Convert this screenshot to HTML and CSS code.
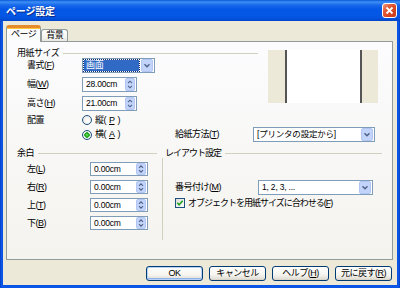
FILE: index.html
```html
<!DOCTYPE html>
<html lang="ja">
<head>
<meta charset="utf-8">
<title>ページ設定</title>
<link rel="stylesheet" href="styles.css">
</head>
<body>
<div class="win">
  <div class="titlebar">
    <span class="title">ページ設定</span>
    <span class="close"><svg width="13" height="13" viewBox="0 0 13 13"><path d="M3.5 3.5l6 6M9.5 3.5l-6 6" stroke="#fff" stroke-width="1.8" fill="none"/></svg></span>
  </div>
  <div class="client">
    <div class="tabs">
      <div class="tab active">ページ</div>
      <div class="tab">背景</div>
    </div>
    <div class="panel">
      <div class="top">
        <div class="paper">
          <div class="ghead"><span>用紙サイズ</span></div>
          <div class="frow">
            <span class="lbl">書式(<u>F</u>)</span>
            <div class="field combo w73"><span class="val hl">画面</span><svg class="ddb" width="12" height="13" viewBox="0 0 12 13"><rect x=".5" y=".5" width="11" height="12" rx="1.5" fill="#C3D4FB" stroke="#B2C5F3"/><path d="M3.5 5.2l2.5 2.5 2.5-2.5" stroke="#4D6185" stroke-width="1.4" fill="none"/></svg></div>
          </div>
          <div class="frow">
            <span class="lbl">幅(<u>W</u>)</span>
            <div class="field w55"><span class="val">28.00cm</span><svg class="sb" width="10" height="13" viewBox="0 0 10 13"><rect x=".5" y=".5" width="9" height="12" rx="1.5" fill="#C3D4FB" stroke="#B2C5F3"/><path d="M3 5.2l2-2 2 2M3 7.8l2 2 2-2" stroke="#4D6185" stroke-width="1.1" fill="none"/></svg></div>
          </div>
          <div class="frow">
            <span class="lbl">高さ(<u>H</u>)</span>
            <div class="field w55"><span class="val">21.00cm</span><svg class="sb" width="10" height="13" viewBox="0 0 10 13"><rect x=".5" y=".5" width="9" height="12" rx="1.5" fill="#C3D4FB" stroke="#B2C5F3"/><path d="M3 5.2l2-2 2 2M3 7.8l2 2 2-2" stroke="#4D6185" stroke-width="1.1" fill="none"/></svg></div>
          </div>
        </div>
        <div class="preview"><div class="page"></div></div>
      </div>
      <div class="rrow first">
        <span class="lbl">配置</span>
        <span class="opt"><span class="radio"></span>縦(<u>P</u>)</span>
      </div>
      <div class="rrow">
        <span class="lbl"></span>
        <span class="opt"><span class="radio on"></span>横(<u>A</u>)</span>
        <span class="lbl2">給紙方法(<u>T</u>)</span>
        <div class="field combo w122"><span class="val">[プリンタの設定から]</span><svg class="ddb" width="12" height="13" viewBox="0 0 12 13"><rect x=".5" y=".5" width="11" height="12" rx="1.5" fill="#C3D4FB" stroke="#B2C5F3"/><path d="M3.5 5.2l2.5 2.5 2.5-2.5" stroke="#4D6185" stroke-width="1.4" fill="none"/></svg></div>
      </div>
      <div class="bottom">
        <div class="margins">
          <div class="ghead"><span>余白</span></div>
          <div class="mrow"><span class="mlbl">左(<u>L</u>)</span><div class="field small w58"><span class="val">0.00cm</span><svg class="sb" width="10" height="12" viewBox="0 0 10 12"><rect x=".5" y=".5" width="9" height="11" rx="1.5" fill="#C3D4FB" stroke="#B2C5F3"/><path d="M3 4.8l2-2 2 2M3 7.2l2 2 2-2" stroke="#4D6185" stroke-width="1.1" fill="none"/></svg></div></div>
          <div class="mrow"><span class="mlbl">右(<u>R</u>)</span><div class="field small w58"><span class="val">0.00cm</span><svg class="sb" width="10" height="12" viewBox="0 0 10 12"><rect x=".5" y=".5" width="9" height="11" rx="1.5" fill="#C3D4FB" stroke="#B2C5F3"/><path d="M3 4.8l2-2 2 2M3 7.2l2 2 2-2" stroke="#4D6185" stroke-width="1.1" fill="none"/></svg></div></div>
          <div class="mrow"><span class="mlbl">上(<u>T</u>)</span><div class="field small w58"><span class="val">0.00cm</span><svg class="sb" width="10" height="12" viewBox="0 0 10 12"><rect x=".5" y=".5" width="9" height="11" rx="1.5" fill="#C3D4FB" stroke="#B2C5F3"/><path d="M3 4.8l2-2 2 2M3 7.2l2 2 2-2" stroke="#4D6185" stroke-width="1.1" fill="none"/></svg></div></div>
          <div class="mrow"><span class="mlbl">下(<u>B</u>)</span><div class="field small w58"><span class="val">0.00cm</span><svg class="sb" width="10" height="12" viewBox="0 0 10 12"><rect x=".5" y=".5" width="9" height="11" rx="1.5" fill="#C3D4FB" stroke="#B2C5F3"/><path d="M3 4.8l2-2 2 2M3 7.2l2 2 2-2" stroke="#4D6185" stroke-width="1.1" fill="none"/></svg></div></div>
        </div>
        <div class="layout">
          <div class="ghead lh"><span class="tight">レイアウト設定</span></div>
          <div class="lbody">
            <div class="nrow">
              <span class="nlbl">番号付け(<u>M</u>)</span>
              <div class="field combo w115"><span class="val">1, 2, 3, ...</span><svg class="ddb" width="12" height="13" viewBox="0 0 12 13"><rect x=".5" y=".5" width="11" height="12" rx="1.5" fill="#C3D4FB" stroke="#B2C5F3"/><path d="M3.5 5.2l2.5 2.5 2.5-2.5" stroke="#4D6185" stroke-width="1.4" fill="none"/></svg></div>
            </div>
            <div class="crow">
              <span class="check"><svg width="8" height="8" viewBox="0 0 8 8"><path d="M1.3 3.8l1.8 1.9 3.6-4" stroke="#21A121" stroke-width="1.6" fill="none"/></svg></span>
              <span class="tight">オブジェクトを用紙サイズに合わせる(<u>F</u>)</span>
            </div>
          </div>
        </div>
      </div>
    </div>
    <div class="buttons">
      <div class="btn def">OK</div>
      <div class="btn">キャンセル</div>
      <div class="btn">ヘルプ(<u>H</u>)</div>
      <div class="btn">元に戻す(<u>R</u>)</div>
    </div>
  </div>
</div>
</body>
</html>
```
FILE: styles.css
```css
* { box-sizing: border-box; }
html, body { margin: 0; padding: 0; }
body {
  width: 400px;
  height: 288px;
  overflow: hidden;
  font-family: "Liberation Sans", "Noto Sans CJK JP", sans-serif;
  font-size: 9px;
  line-height: 1;
  letter-spacing: -0.5px;
  color: #000;
  background: #0A4BD6;
}
u { text-decoration: underline; text-underline-offset: 1px; }
.tight { letter-spacing: -1px; }

.win {
  width: 400px;
  height: 288px;
  display: flex;
  flex-direction: column;
  background: linear-gradient(to right, #0838B8 0, #0A55E6 1px, #0A55E6 399px, #0838B8 400px);
}
.titlebar {
  height: 21px;
  flex: none;
  display: flex;
  align-items: center;
  padding: 0 3px 0 6px;
  background: linear-gradient(to bottom, #0A5AD8 0, #3D8FF5 2px, #1A69EC 5px, #0558E6 9px, #0456E4 16px, #0250DB 19px, #0345C6 21px);
}
.title {
  flex: 1;
  color: #fff;
  font-family: "Noto Sans CJK JP", sans-serif;
  font-weight: bold;
  font-size: 10px;
  letter-spacing: -0.2px;
  text-shadow: 1px 1px 0 #0A2C8A;
}
.close {
  width: 15px;
  height: 15px;
  border: 1px solid #fff;
  border-radius: 3px;
  background: linear-gradient(135deg, #EE9A7E 0, #E05A36 35%, #D5431E 70%, #C53B1C 100%);
  display: flex;
  align-items: center;
  justify-content: center;
}

.client {
  flex: 1;
  margin: 0 3px 3px;
  background: #ECE9D8;
  padding: 4px 0 0 3px;
  display: flex;
  flex-direction: column;
}
.tabs {
  display: flex;
  align-items: flex-end;
  height: 16px;
}
.tab {
  height: 12px;
  padding: 0 4px;
  border: 1px solid #919B9C;
  border-bottom: none;
  border-radius: 3px 3px 0 0;
  background: linear-gradient(#FFFFFF, #F3F3EF 70%, #E8E7E0);
  line-height: 11px;
  white-space: nowrap;
}
.tab.active {
  height: 17px;
  margin-bottom: -1px;
  border-top: 3px solid #E68B2C;
  box-shadow: inset 0 1px 0 #FFC73C;
  background: #FCFCFE;
  position: relative;
  z-index: 1;
  line-height: 13px;
}

.panel {
  width: 387px;
  height: 219px;
  border: 1px solid #919B9C;
  background: linear-gradient(#FCFCFE, #F4F3EE);
  padding: 6px 0 0 10px;
  display: flex;
  flex-direction: column;
}
.top { display: flex; }
.paper { width: 241px; }
.ghead {
  display: flex;
  align-items: center;
  height: 10px;
  white-space: nowrap;
}
.ghead::after {
  content: "";
  flex: 1;
  border-top: 1px solid #D0D0BF;
  margin-left: 4px;
}
.frow {
  display: flex;
  align-items: center;
  height: 15px;
  margin-bottom: 4px;
}
.lbl {
  width: 65px;
  padding-left: 10px;
  flex: none;
  white-space: nowrap;
}
.field {
  height: 15px;
  border: 1px solid #7F9DB9;
  background: #fff;
  display: flex;
  align-items: center;
  padding: 0 0 0 1px;
  flex: none;
}
.field.small { height: 14px; }
.val {
  flex: 1;
  padding-left: 2px;
  white-space: nowrap;
  font-size: 8.5px;
  letter-spacing: -0.2px;
}
.val.hl {
  font-size: 9px;
  background: #316AC5;
  color: #fff;
  height: 11px;
  line-height: 11px;
  margin-right: 2px;
  outline: 1px dotted #0B2D6B;
}
.ddb { flex: none; margin-right: 1px; }
.sb { flex: none; margin-right: 1px; }
.w73 { width: 73px; }
.w55 { width: 55px; }
.w58 { width: 58px; }
.w115 { width: 115px; }
.w122 { width: 122px; }

.preview {
  width: 110px;
  height: 53px;
  margin: 2px 0 0 10px;
  background: #ECE9D8;
  display: flex;
}
.page {
  margin-left: 17px;
  width: 77px;
  height: 100%;
  background: #fff;
  border-left: 2px solid #555;
  border-right: 2px solid #555;
}

.rrow {
  display: flex;
  align-items: center;
  height: 12px;
  white-space: nowrap;
}
.rrow.first { margin-top: -1px; }
.rrow + .rrow { height: 15px; margin-top: 1px; }
.opt {
  width: 93px;
  display: flex;
  align-items: center;
  gap: 3px;
}
.radio {
  width: 10px;
  height: 10px;
  flex: none;
  border-radius: 50%;
  border: 1px solid #1C5180;
  background: radial-gradient(circle at 60% 60%, #FFFFFF 0, #ECEBE6 70%, #D6D4CB 100%);
}
.radio.on {
  background: radial-gradient(circle at 50% 50%, #7BE06F 0, #2BB52A 1.5px, #21A121 2.5px, #fff 3px, #ECEBE6 4px);
}
.lbl2 { width: 78px; }

.bottom {
  display: flex;
  margin-top: 6px;
}
.margins { width: 140px; }
.mrow {
  display: flex;
  align-items: center;
  height: 14px;
  margin-top: 4px;
}
.mlbl { width: 73px; padding-left: 10px; white-space: nowrap; }
.layout {
  width: 220px;
  margin-left: 5px;
}
.lh { padding-left: 3px; }
.lbody {
  border-left: 1px solid #D0D0BF;
  height: 82px;
  padding: 22px 0 0 12px;
}
.nrow {
  display: flex;
  align-items: center;
  height: 15px;
}
.nlbl { width: 83px; white-space: nowrap; }
.crow {
  display: flex;
  align-items: center;
  gap: 3px;
  margin-top: 3px;
  height: 10px;
  white-space: nowrap;
}
.check {
  width: 10px;
  height: 10px;
  flex: none;
  border: 1px solid #1C5180;
  background: linear-gradient(135deg, #DCDCD7, #fff);
  display: flex;
  align-items: center;
  justify-content: center;
}

.buttons {
  display: flex;
  justify-content: flex-end;
  gap: 6px;
  margin-top: 6px;
  padding-right: 5px;
}
.btn {
  width: 57px;
  height: 15px;
  border: 1px solid #003C74;
  border-radius: 3px;
  background: linear-gradient(#FFFFFF, #F5F4EF 60%, #E3E0D7 90%, #D6D0C5);
  display: flex;
  align-items: center;
  justify-content: center;
  white-space: nowrap;
}
.btn.def {
  box-shadow: inset 0 0 0 1px #B7D2F7, inset 0 -1px 0 1px #8FB2ED;
}
```
